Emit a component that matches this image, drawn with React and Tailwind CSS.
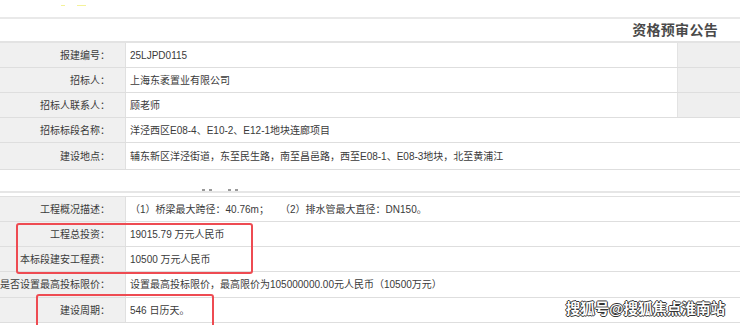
import React from 'react';

const rowsTop = [
  { label: '报建编号：', value: '25LJPD0115', side: true },
  { label: '招标人：', value: '上海东袤置业有限公司', side: true },
  { label: '招标人联系人：', value: '顾老师', side: true },
  { label: '招标标段名称：', value: '洋泾西区E08-4、E10-2、E12-1地块连廊项目' },
  { label: '建设地点：', value: '辅东新区洋泾街道，东至民生路，南至昌邑路，西至E08-1、E08-3地块，北至黄浦江', h: 'h-[27px]' },
];

const rowsBottom = [
  { label: '工程概况描述：', value: '（1）桥梁最大跨径：40.76m；    （2）排水管最大直径：DN150。' },
  { label: '工程总投资：', value: '19015.79 万元人民币' },
  { label: '本标段建安工程费：', value: '10500 万元人民币' },
  { label: '是否设置最高投标限价：', value: '设置最高投标限价，最高限价为105000000.00元人民币（10500万元）', h: 'h-[26px]' },
  { label: '建设周期：', value: '546 日历天。' },
];

function Row({ label, value, side, h }) {
  return (
    <div className={`flex ${h || 'h-[25px]'} border-b border-[#dedede]`}>
      <div className="w-[126px] shrink-0 bg-[#f0f0f0] border-r border-[#e0e0e0] flex items-center justify-end pr-[15px] whitespace-nowrap">
        {label}
      </div>
      <div className="flex-1 flex items-center pl-[4px] whitespace-pre bg-white">{value}</div>
      {side && <div className="w-[63px] shrink-0 bg-[#efefef] border-l border-[#e3e3e3]" />}
    </div>
  );
}

export default function App() {
  return (
    <div className="relative w-[740px] h-[325px] overflow-hidden bg-white text-[10px] text-[#3a3a3a] font-['Liberation_Sans','Noto_Sans_CJK_SC',sans-serif]">
      {/* top strip */}
      <div className="h-[19px] border-b-2 border-[#e9e9e9] flex items-start gap-[12px] pl-[61px] pt-[5px]">
        <span className="w-[4px] h-px bg-[#f4f29a]" />
        <span className="w-[9px] h-px bg-[#f4f29a]" />
      </div>

      {/* header */}
      <div className="h-[24px] border-b-2 border-[#e3e3e3] flex items-center justify-end pr-[22px]">
        <span className="text-[14px] font-bold text-[#4a4a4a] tracking-[0.3px]">资格预审公告</span>
      </div>

      {rowsTop.map((r) => (
        <Row key={r.label} {...r} />
      ))}

      {/* gap */}
      <div className="h-[23px] border-b-2 border-[#e6e6e6] flex items-end gap-[6px] pl-[202px]">
        <span className="flex gap-[4px]">
          <span className="w-[3px] h-[2px] bg-[#9a9a9a]" />
          <span className="w-[3px] h-[2px] bg-[#9a9a9a]" />
        </span>
        <span className="flex gap-[4px] ml-[10px]">
          <span className="w-[3px] h-[2px] bg-[#9a9a9a]" />
          <span className="w-[3px] h-[2px] bg-[#9a9a9a]" />
        </span>
      </div>
      <div className="h-[3px]" />
      <div className="border-t border-[#e0e0e0]" />

      {rowsBottom.map((r) => (
        <Row key={r.label} {...r} />
      ))}

      {/* highlight boxes */}
      <div className="absolute left-[16px] top-[223px] w-[237px] h-[51px] border-[2.5px] border-[#ee4b52] rounded-[3px]" />
      <div className="absolute left-[36px] top-[294px] w-[178px] h-[40px] border-[2.5px] border-[#ee4b52] rounded-[3px]" />

      {/* watermark */}
      <div className="absolute right-[15px] top-[299px] text-[14.5px] font-bold text-white [text-shadow:1px_0_0_#333,-1px_0_0_#333,0_1px_0_#333,0_-1px_0_#333]">
        搜狐号@搜狐焦点淮南站
      </div>
    </div>
  );
}
